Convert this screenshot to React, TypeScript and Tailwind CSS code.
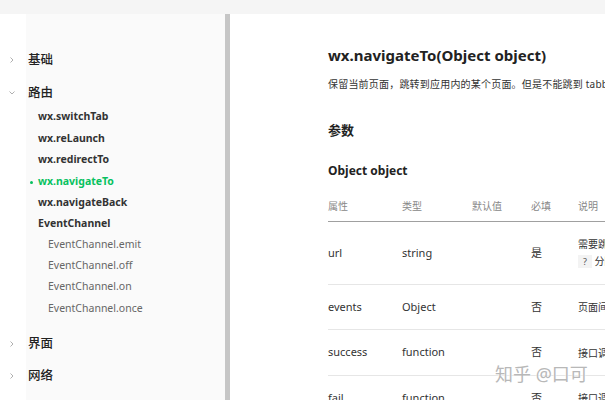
import React from "react";

const font = "font-['Noto_Sans','Noto_Sans_CJK_SC',sans-serif]";

function Chevron({ open }: { open?: boolean }) {
  return (
    <svg width="8" height="8" viewBox="0 0 8 8" className="shrink-0">
      {open ? (
        <polyline points="1.5,2.5 4,5 6.5,2.5" fill="none" stroke="#b0b0b0" strokeWidth="1" />
      ) : (
        <polyline points="2.5,1.5 5,4 2.5,6.5" fill="none" stroke="#b0b0b0" strokeWidth="1" />
      )}
    </svg>
  );
}

function Group({ label, open }: { label: string; open?: boolean }) {
  return (
    <div className="h-[22px] flex items-center">
      <div className="w-[28px] flex pl-[8px]">
        <Chevron open={open} />
      </div>
      <span className="text-[12.5px] text-[#222] font-medium">{label}</span>
    </div>
  );
}

function Sub({ label, active }: { label: string; active?: boolean }) {
  return (
    <div className="h-[21.6px] flex items-center relative pl-[38px]">
      {active && <span className="absolute left-[30px] top-[10px] w-[3px] h-[3px] rounded-full bg-[#07c160]" />}
      <span className={`text-[10.5px] font-bold ${active ? "text-[#07c160]" : "text-[#333]"}`}>{label}</span>
    </div>
  );
}

function SubSub({ label }: { label: string }) {
  return (
    <div className="h-[21.3px] flex items-center pl-[48px]">
      <span className="text-[10.5px] text-[#666]">{label}</span>
    </div>
  );
}

const cols = "grid grid-cols-[74px_70px_59px_47px_1fr]";

function Row({ a, b, c, d, h }: { a: string; b: string; c: string; d: React.ReactNode; h: string }) {
  return (
    <div className={`${cols} ${h} items-center border-b border-[#e6e6e6] text-[11px] text-[#333]`}>
      <div>{a}</div>
      <div>{b}</div>
      <div></div>
      <div>{c}</div>
      <div className="whitespace-nowrap text-[10px] leading-[16px]">{d}</div>
    </div>
  );
}

export default function App() {
  return (
    <div className={`w-[605px] h-[400px] overflow-hidden flex flex-col bg-white relative ${font}`}>
      <div className="h-[14px] shrink-0 bg-[#f5f5f5]" />
      <div className="flex flex-1 min-h-0">
        <aside className="w-[225px] shrink-0 bg-[linear-gradient(to_right,#ffffff_26px,#fafafa_26px)] pt-[35px]">
          <Group label="基础" />
          <div className="h-[11px]" />
          <Group label="路由" open />
          <div className="h-[2px]" />
          <Sub label="wx.switchTab" />
          <Sub label="wx.reLaunch" />
          <Sub label="wx.redirectTo" />
          <Sub label="wx.navigateTo" active />
          <Sub label="wx.navigateBack" />
          <div className="h-[20px] flex items-center pl-[38px]">
            <span className="text-[10.5px] font-bold text-[#333]">EventChannel</span>
          </div>
          <SubSub label="EventChannel.emit" />
          <SubSub label="EventChannel.off" />
          <SubSub label="EventChannel.on" />
          <SubSub label="EventChannel.once" />
          <div className="h-[14px]" />
          <Group label="界面" />
          <div className="h-[10px]" />
          <Group label="网络" />
        </aside>
        <div className="w-[5px] shrink-0 bg-[#c6c6c6]" />
        <main className="flex-1 min-w-0 overflow-hidden pl-[98px] pt-[31px]">
          <h1 className="text-[15px] leading-[20px] font-bold text-[#222] whitespace-nowrap">
            wx.navigateTo(Object object)
          </h1>
          <p className="mt-[11px] text-[10px] leading-[16px] tracking-[0.2px] text-[#333] whitespace-nowrap">
            保留当前页面，跳转到应用内的某个页面。但是不能跳到 tabbar 页面。使用 wx.navigateBack 可以返回到原页面。
          </p>
          <h2 className="mt-[28px] text-[13px] leading-[20px] font-bold text-[#222]">参数</h2>
          <h3 className="mt-[22px] text-[12px] leading-[18px] font-bold text-[#222]">Object object</h3>
          <div className="mt-[12px] w-[420px]">
            <div className={`${cols} h-[30px] items-center border-b border-[#a0a0a0] text-[10px] text-[#888]`}>
              <div>属性</div>
              <div>类型</div>
              <div>默认值</div>
              <div>必填</div>
              <div>说明</div>
            </div>
            <Row
              a="url"
              b="string"
              c="是"
              h="h-[63px]"
              d={
                <>
                  <div>需要跳转的应用内非 tabBar 的页面的路径</div>
                  <div className="mt-[1px]">
                    <span className="bg-[#f3f3f3] px-[5px] text-[9px] text-[#555]">?</span> 分隔
                  </div>
                </>
              }
            />
            <Row a="events" b="Object" c="否" h="h-[45px]" d="页面间通信接口，用于监听被打开页面发送到当前页面的数据。" />
            <Row a="success" b="function" c="否" h="h-[46px]" d="接口调用成功的回调函数" />
            <Row a="fail" b="function" c="否" h="h-[45px]" d="接口调用失败的回调函数" />
          </div>
        </main>
      </div>
      <div className="absolute left-[495px] top-[363px] text-[18px] leading-[22px] text-[#b8b8b8] whitespace-nowrap [text-shadow:0_0_2px_#fff,0_0_2px_#fff]">
        知乎 @口可
      </div>
    </div>
  );
}
